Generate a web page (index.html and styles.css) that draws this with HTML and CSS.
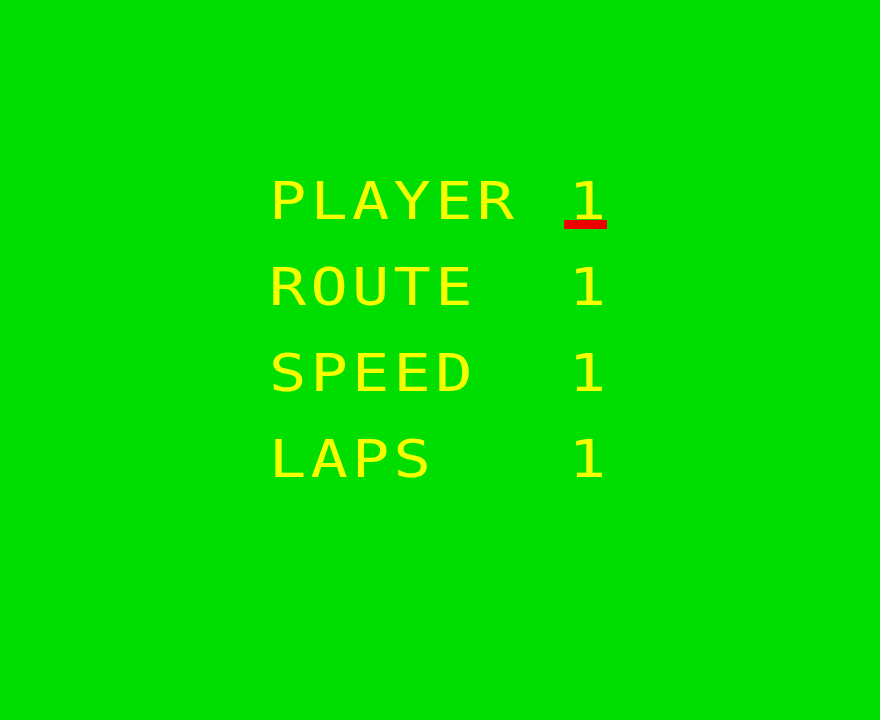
FILE: index.html
```html
<!DOCTYPE html>
<html>
<head>
<meta charset="utf-8">
<link rel="stylesheet" href="styles.css">
</head>
<body>
<div class="screen">
  <div class="menu">
    <div class="row"><span class="label">PLAYER</span><span class="value selected">1</span></div>
    <div class="row"><span class="label">ROUTE</span><span class="value">1</span></div>
    <div class="row"><span class="label">SPEED</span><span class="value">1</span></div>
    <div class="row"><span class="label">LAPS</span><span class="value">1</span></div>
  </div>
</div>
</body>
</html>
```
FILE: styles.css
```css
html, body {
  margin: 0;
  padding: 0;
  background: #00dd00;
}
.screen {
  width: 880px;
  height: 720px;
  background: #00dd00;
  padding: 158px 0 0 269px;
  box-sizing: border-box;
  overflow: hidden;
}
.menu {
  display: flex;
  flex-direction: column;
  width: max-content;
  font-family: "DejaVu Sans Mono", monospace;
  font-size: 52px;
  line-height: 86px;
  color: #f6ff00;
  transform: scaleX(1.19);
  transform-origin: left top;
}
.row {
  display: flex;
}
.label {
  width: 248px;
  letter-spacing: 3.6px;
}
.value {
  position: relative;
  display: inline-block;
  width: 36.2px;
  text-align: center;
  padding-left: 3px;
  box-sizing: border-box;
}
.selected::after {
  content: "";
  position: absolute;
  left: 0;
  right: 0;
  top: 62px;
  height: 9px;
  background: #ee0000;
}
```
